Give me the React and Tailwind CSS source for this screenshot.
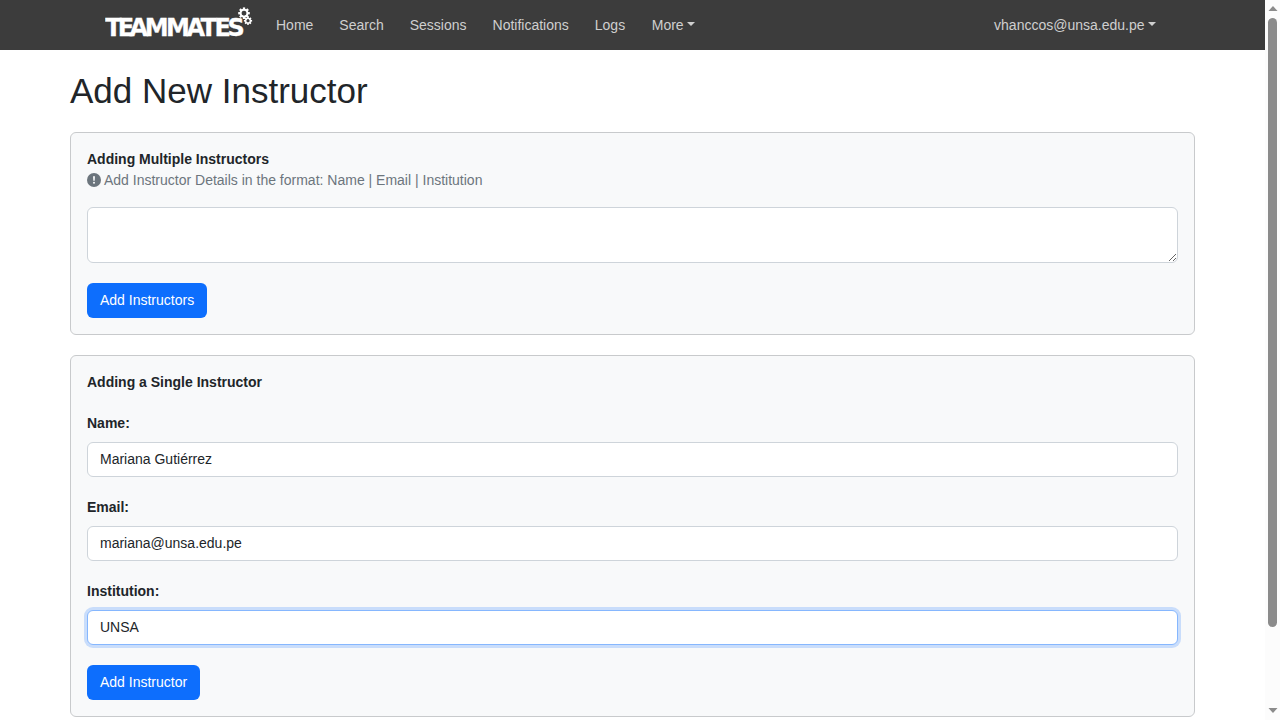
import React from 'react';

function Gear({ cx, cy, r, hole, teeth, tooth, width }) {
  const step = 360 / teeth;
  return (
    <g transform={`translate(${cx} ${cy})`}>
      {Array.from({ length: teeth }, (_, i) => (
        <rect key={i} x={-width / 2} y={-tooth} width={width} height={tooth - hole} fill="#fff" transform={`rotate(${i * step})`} />
      ))}
      <circle r={(r + hole) / 2} fill="none" stroke="#fff" strokeWidth={r - hole} />
    </g>
  );
}

function Logo() {
  return (
    <svg width="150" height="42" viewBox="0 0 150 42" className="block shrink-0" aria-label="TEAMMATES">
      <text x="0.2 12.8 24.4 39.8 61 81.4 95.6 109.4 122.6" y="32" fill="#fff" stroke="#fff" strokeWidth="0.3" fontFamily="DejaVu Sans" fontWeight="700" fontSize="24">TEAMMATES</text>
      <Gear cx={139} cy={9.2} r={4.4} hole={2.6} teeth={8} tooth={5.8} width={2.3} />
      <Gear cx={143} cy={16.8} r={3} hole={1.8} teeth={8} tooth={4.1} width={1.7} />
    </svg>
  );
}

function Caret() {
  return <span className="mb-[4px] ml-[3.5px] inline-block border-x-4 border-t-4 border-x-transparent border-t-[#cfcfcf]" />;
}

function Navbar() {
  return (
    <nav className="flex h-[50px] items-center bg-[#3c3c3c] pr-[109px] pl-[105px] text-[#cfcfcf]">
      <Logo />
      <div className="ml-[21px] flex flex-1 gap-[26px]">
        {['Home', 'Search', 'Sessions', 'Notifications', 'Logs'].map((item) => (
          <a key={item}>{item}</a>
        ))}
        <a className="ml-[0.6px] whitespace-nowrap">More<Caret /></a>
      </div>
      <a className="whitespace-nowrap">vhanccos@unsa.edu.pe<Caret /></a>
    </nav>
  );
}

const control = 'block w-full rounded-[6px] border bg-white px-3 text-[#212529] outline-none';
const button = 'mt-5 block h-[35px] rounded-[6px] bg-[#0d6efd] px-[13px] text-white';

function Field({ label, value, focused }) {
  return (
    <label className="mt-5 block">
      <span className="mb-2 block font-bold">{label}</span>
      <input
        defaultValue={value}
        className={`${control} h-[35px] pb-[2px] ${focused ? 'border-[#86b7fe] shadow-[0_0_0_3px_rgba(13,110,253,0.2)]' : 'border-[#ced4da]'}`}
      />
    </label>
  );
}

function Scrollbar() {
  return (
    <div className="flex w-[15px] shrink-0 flex-col items-center bg-[#fcfcfc] pt-[6px] pb-[7px]">
      <svg width="10" height="6" viewBox="0 0 10 6"><path d="M5 0L9.5 5H0.5Z" fill="#8b8b8b" /></svg>
      <div className="mt-[6px] h-[609px] w-[9px] rounded-full bg-[#8b8b8b]" />
      <div className="flex-1" />
      <svg width="10" height="5" viewBox="0 0 10 5"><path d="M0.5 0H9.5L5 5Z" fill="#8b8b8b" /></svg>
    </div>
  );
}

export default function App() {
  return (
    <div className="flex h-[720px] w-[1280px] overflow-hidden bg-white font-['Liberation_Sans',sans-serif] text-[14px] leading-[21px] text-[#212529]">
      <div className="w-[1265px] shrink-0">
        <Navbar />
        <main className="mx-[70px]">
          <h1 className="pt-5 text-[35px] leading-[42px]">Add New Instructor</h1>
          <section className="mt-5 h-[203px] rounded-[6px] border border-[#c8cacc] bg-[#f8f9fa] p-4">
            <h2 className="font-bold">Adding Multiple Instructors</h2>
            <p className="flex items-center text-[#6c757d]">
              <svg width="14" height="14" viewBox="0 0 14 14" className="mr-[3px] mb-[1px]">
                <circle cx="7" cy="7" r="7" fill="#6c757d" />
                <path d="M6 3.2H8L7.7 7.8H6.3Z" fill="#f8f9fa" />
                <circle cx="7" cy="9.7" r="1" fill="#f8f9fa" />
              </svg>
              Add Instructor Details in the format: Name | Email | Institution
            </p>
            <textarea className={`${control} mt-4 h-[56px] resize-y border-[#ced4da] py-[6px]`} />
            <button className={button}>Add Instructors</button>
          </section>
          <section className="mt-5 h-[362px] rounded-[6px] border border-[#c8cacc] bg-[#f8f9fa] p-4">
            <h2 className="font-bold">Adding a Single Instructor</h2>
            <Field label="Name:" value="Mariana Gutiérrez" />
            <Field label="Email:" value="mariana@unsa.edu.pe" />
            <Field label="Institution:" value="UNSA" focused />
            <button className={button}>Add Instructor</button>
          </section>
        </main>
      </div>
      <Scrollbar />
    </div>
  );
}
